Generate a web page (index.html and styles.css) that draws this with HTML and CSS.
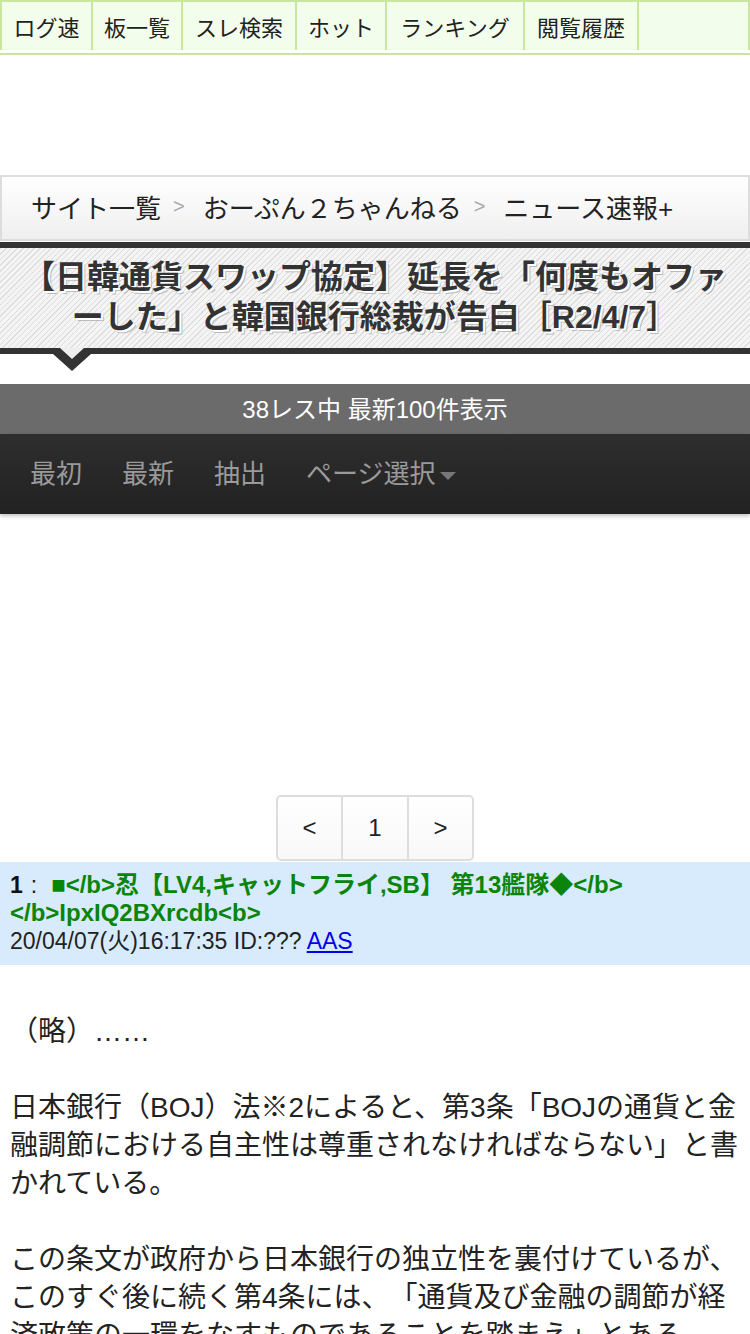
FILE: index.html
```html
<!DOCTYPE html>
<html lang="ja">
<head>
<meta charset="UTF-8">
<meta name="viewport" content="width=device-width, initial-scale=1.0">
<title>【日韓通貨スワップ協定】延長を「何度もオファーした」と韓国銀行総裁が告白［R2/4/7］</title>
<link rel="stylesheet" href="styles.css">
</head>
<body>

<ul class="topnav">
    <li class="w91">ログ速</li>
    <li class="w90">板一覧</li>
    <li class="w114">スレ検索</li>
    <li class="w90">ホット</li>
    <li class="w138">ランキング</li>
    <li class="w114">閲覧履歴</li>
    <li class="fill"></li>
</ul>

<div class="adspace-top"></div>

<div class="breadcrumb">
    <span>サイト一覧</span><span class="sep">&gt;</span>
    <span>おーぷん２ちゃんねる</span><span class="sep">&gt;</span>
    <span>ニュース速報+</span>
</div>

<div class="thread-title">
    <h1>【日韓通貨スワップ協定】延長を「何度もオファーした」と韓国銀行総裁が告白［R2/4/7］</h1>
    <span class="arrow"></span>
</div>

<div class="res-count">38レス中 最新100件表示</div>
<div class="menubar">
    <span>最初</span>
    <span>最新</span>
    <span>抽出</span>
    <span>ページ選択<i class="caret"></i></span>
</div>

<div class="adspace"></div>

<div class="pager">
    <span>&lt;</span>
    <span>1</span>
    <span>&gt;</span>
</div>

<div class="post-head">
    <b class="num">1</b><span class="colon">:</span><span class="name">■&lt;/b&gt;忍【LV4,キャットフライ,SB】 第13艦隊◆&lt;/b&gt;&lt;/b&gt;IpxIQ2BXrcdb&lt;b&gt;</span><br>
    20/04/07(火)16:17:35 ID:??? <a href="#">AAS</a>
</div>

<div class="post-body">
    <p>（略）……</p>
    <p>日本銀行（BOJ）法※2によると、第3条「BOJの通貨と金融調節における自主性は尊重されなければならない」と書かれている。</p>
    <p>この条文が政府から日本銀行の独立性を裏付けているが、このすぐ後に続く第4条には、「通貨及び金融の調節が経済政策の一環をなすものであることを踏まえ」とある。</p>
</div>

</body>
</html>
```

FILE: styles.css
```css
body {
    font-family: "Liberation Sans", "Noto Sans CJK JP", sans-serif;
    margin: 0;
    padding: 0;
    background-color: #fff;
    color: #222;
    width: 750px;
    overflow: hidden;
    text-spacing-trim: space-all;
}
.topnav {
    list-style-type: none;
    margin: 0;
    padding: 0 0 3px;
    display: flex;
    height: 55px;
    border-top: 2px solid #c8e6a0;
    border-bottom: 2px solid #c8e6a0;
    box-sizing: border-box;
}
.topnav li {
    background-color: #f3fdec;
    border-left: 2px solid #c8e6a0;
    font-size: 22px;
    color: #222;
    display: flex;
    align-items: center;
    justify-content: center;
    box-sizing: border-box;
}
.topnav li:last-child {
    border-right: 2px solid #c8e6a0;
}
.w91 { width: 91px; }
.w90 { width: 90px; }
.w114 { width: 114px; }
.w138 { width: 138px; }
.fill { flex: 1; }
.adspace-top {
    height: 120px;
}
.breadcrumb {
    height: 66px;
    border: 2px solid #ddd;
    background: linear-gradient(#fff, #efefef);
    box-sizing: border-box;
    display: flex;
    align-items: center;
    padding: 0 0 3px 29px;
    font-size: 26px;
    color: #222;
}
.breadcrumb .sep {
    color: #aaa;
    font-size: 20px;
    margin: 0 18px 0 12px;
}
.thread-title {
    position: relative;
    margin-top: 1px;
    border-top: 6px solid #333;
    border-bottom: 6px solid #333;
    background-color: #eee;
    background-image: repeating-linear-gradient(135deg, #ddd 0, #ddd 1px, #f4f4f4 1px, #f4f4f4 4px);
    padding: 9px 14px 11px;
}
.thread-title h1 {
    margin: 0;
    text-align: center;
    font-size: 32px;
    line-height: 40px;
    color: #333;
    text-spacing-trim: normal;
    text-shadow: 2px 2px 0 #fff, 3px 3px 0 #bbb;
}
.arrow {
    position: absolute;
    left: 53px;
    bottom: -23px;
    width: 0;
    height: 0;
    border-left: 19px solid transparent;
    border-right: 19px solid transparent;
    border-top: 17px solid #333;
}
.arrow::after {
    content: "";
    position: absolute;
    left: -12px;
    top: -23px;
    border-left: 12px solid transparent;
    border-right: 12px solid transparent;
    border-top: 11px solid #eee;
}
.res-count {
    margin-top: 30px;
    height: 50px;
    padding-bottom: 3px;
    box-sizing: border-box;
    background-color: #6b6b6b;
    color: #fff;
    font-size: 24px;
    display: flex;
    align-items: center;
    justify-content: center;
}
.menubar {
    height: 80px;
    padding-bottom: 6px;
    box-sizing: border-box;
    background: linear-gradient(#2e2e2e, #222);
    display: flex;
    align-items: center;
    padding-left: 30px;
    gap: 40px;
    font-size: 26px;
    color: #9a9a9a;
    box-shadow: 0 2px 4px rgba(0, 0, 0, 0.25);
}
.caret {
    display: inline-block;
    margin-left: 4px;
    vertical-align: middle;
    border-left: 8px solid transparent;
    border-right: 8px solid transparent;
    border-top: 8px solid #777;
}
.adspace {
    height: 281px;
}
.pager {
    display: flex;
    justify-content: center;
    margin-bottom: 1px;
}
.pager span {
    width: 66px;
    height: 66px;
    border: 2px solid #ddd;
    border-left-width: 1px;
    border-right-width: 1px;
    box-sizing: border-box;
    display: flex;
    align-items: center;
    justify-content: center;
    font-size: 24px;
    color: #222;
    background: linear-gradient(#fff, #f8f8f8);
}
.pager span:first-child {
    border-left-width: 2px;
    border-radius: 5px 0 0 5px;
}
.pager span:last-child {
    border-right-width: 2px;
    border-radius: 0 5px 5px 0;
}
.post-head {
    background-color: #d8ebfc;
    padding: 9px 10px 10px;
    font-size: 23px;
    line-height: 28px;
    color: #222;
}
.post-head .num {
    color: #111;
}
.post-head .colon {
    margin: 0 14px 0 8px;
}
.post-head .name {
    color: #0a850a;
    font-weight: bold;
    font-size: 24px;
}
.post-head a {
    color: #0000ee;
}
.post-body {
    padding: 48px 10px 0;
    font-size: 28px;
    line-height: 38px;
    color: #222;
}
.post-body p {
    margin: 0 0 38px;
}
```
